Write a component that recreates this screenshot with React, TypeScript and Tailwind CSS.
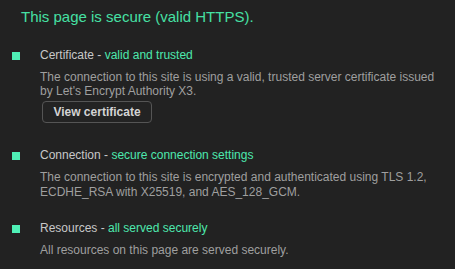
export default function App() {
  return (
    <div className="w-[455px] h-[269px] overflow-hidden bg-[#222222] font-['Liberation_Sans',Arial,sans-serif]">
      {/* --- HEADER --- */}
      <h1 className="pl-[21px] pt-[8px] text-[15px] leading-[18px] text-[#46e0a4]">
        This page is secure (valid HTTPS).
      </h1>

      {/* --- CERTIFICATE --- */}
      <section className="flex items-start mt-[21.5px]">
        <span className="ml-[12px] mt-[4px] w-2 h-2 bg-[#4ff0b6] flex-shrink-0"></span>
        <div className="ml-[20px]">
          <div className="text-[12px] leading-[15px] text-[#c8c8c8]">
            Certificate - <span className="text-[#4de8ae]">valid and trusted</span>
          </div>
          <p className="mt-[7px] text-[12px] leading-[14.5px] text-[#9f9f9f]">
            The connection to this site is using a valid, trusted server certificate issued
            <br />
            by Let's Encrypt Authority X3.
          </p>
          <button className="ml-[2px] mt-[2.5px] w-[110px] h-[22px] rounded-[4px] border border-[#555555] bg-[#232323] text-[12px] font-bold text-[#d4d4d4]">
            View certificate
          </button>
        </div>
      </section>

      {/* --- CONNECTION --- */}
      <section className="flex items-start mt-[25.3px]">
        <span className="ml-[12px] mt-[4px] w-2 h-2 bg-[#4ff0b6] flex-shrink-0"></span>
        <div className="ml-[20px]">
          <div className="text-[12px] leading-[15px] text-[#c8c8c8]">
            Connection - <span className="text-[#4de8ae]">secure connection settings</span>
          </div>
          <p className="mt-[7px] text-[12px] leading-[14.5px] text-[#9f9f9f]">
            The connection to this site is encrypted and authenticated using TLS 1.2,
            <br />
            ECDHE_RSA with X25519, and AES_128_GCM.
          </p>
        </div>
      </section>

      {/* --- RESOURCES --- */}
      <section className="flex items-start mt-[22.2px]">
        <span className="ml-[12px] mt-[4px] w-2 h-2 bg-[#4ff0b6] flex-shrink-0"></span>
        <div className="ml-[20px]">
          <div className="text-[12px] leading-[15px] text-[#c8c8c8]">
            Resources - <span className="text-[#4de8ae]">all served securely</span>
          </div>
          <p className="mt-[7px] text-[12px] leading-[14.5px] text-[#9f9f9f]">
            All resources on this page are served securely.
          </p>
        </div>
      </section>
    </div>
  );
}
